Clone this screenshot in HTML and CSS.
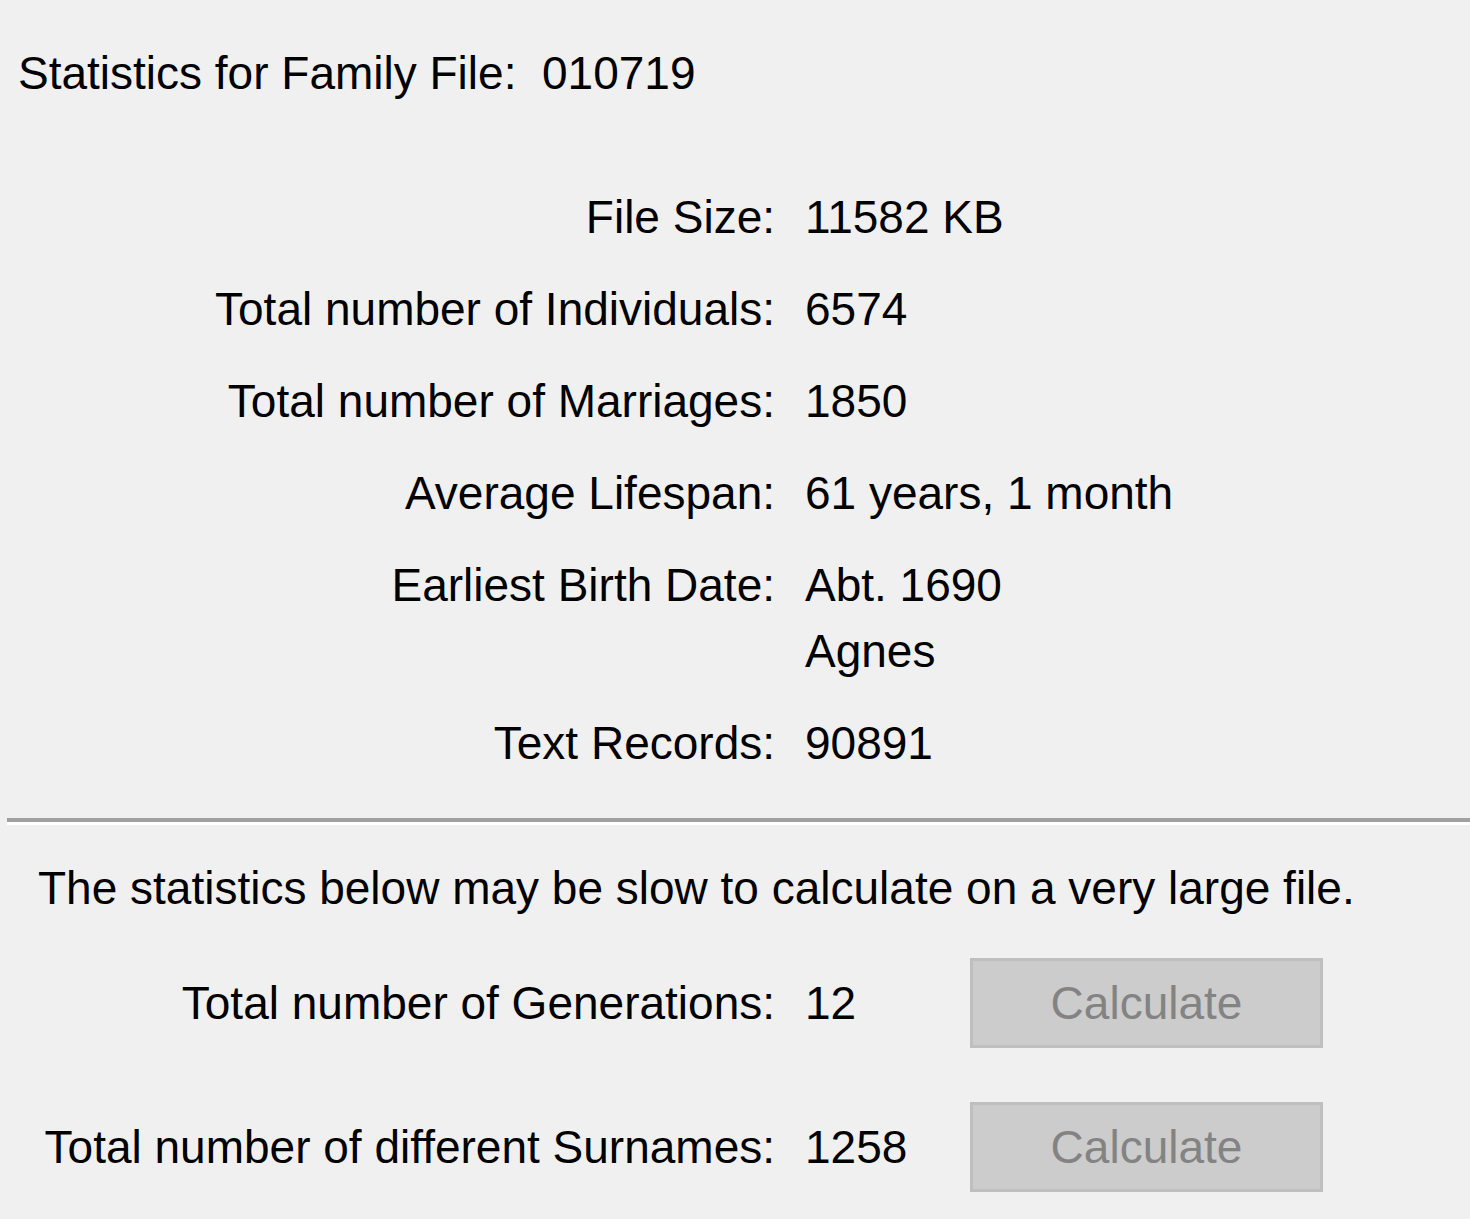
FILE: index.html
```html
<!DOCTYPE html>
<html lang="en">

<head>
    <meta charset="UTF-8">
    <title>Family File Statistics</title>
    <link rel="stylesheet" href="styles.css">
</head>

<body>
    <div class="dialog">
        <h1 class="title">Statistics for Family File:&nbsp; 010719</h1>

        <div class="stats">
            <div class="label">File Size:</div>
            <div class="value">11582 KB</div>

            <div class="label">Total number of Individuals:</div>
            <div class="value">6574</div>

            <div class="label">Total number of Marriages:</div>
            <div class="value">1850</div>

            <div class="label">Average Lifespan:</div>
            <div class="value">61 years, 1 month</div>

            <div class="label">Earliest Birth Date:</div>
            <div class="value">Abt. 1690<br>Agnes</div>

            <div class="label">Text Records:</div>
            <div class="value">90891</div>
        </div>

        <div class="separator"></div>

        <p class="note">The statistics below may be slow to calculate on a very large file.</p>

        <div class="slow-stats">
            <div class="label">Total number of Generations:</div>
            <div class="value">12</div>
            <button class="calc" disabled>Calculate</button>

            <div class="label">Total number of different Surnames:</div>
            <div class="value">1258</div>
            <button class="calc" disabled>Calculate</button>
        </div>
    </div>
</body>

</html>
```

FILE: styles.css
```css
body {
    margin: 0;
    background-color: #f0f0f0;
    font-family: "Liberation Sans", Arial, sans-serif;
    font-size: 46px;
    color: #000;
}

.dialog {
    padding: 40px 0 0 0;
}

.title {
    font-size: 46px;
    font-weight: normal;
    margin: 0 0 0 18px;
    line-height: 66px;
}

.stats {
    display: grid;
    grid-template-columns: 775px auto;
    column-gap: 30px;
    row-gap: 26px;
    margin-top: 78px;
    line-height: 66px;
}

.label {
    text-align: right;
}

.separator {
    margin: 42px 0 0 7px;
    height: 4px;
    background-color: #a0a0a0;
    border-bottom: 3px solid #ffffff;
}

.note {
    margin: 30px 0 0 38px;
    line-height: 66px;
}

.slow-stats {
    display: grid;
    grid-template-columns: 775px 135px 353px;
    column-gap: 30px;
    row-gap: 54px;
    align-items: center;
    margin-top: 37px;
}

.calc {
    height: 90px;
    background-color: #cccccc;
    border: 3px solid #bfbfbf;
    color: #838383;
    font-family: inherit;
    font-size: 46px;
    padding: 0;
}
```
